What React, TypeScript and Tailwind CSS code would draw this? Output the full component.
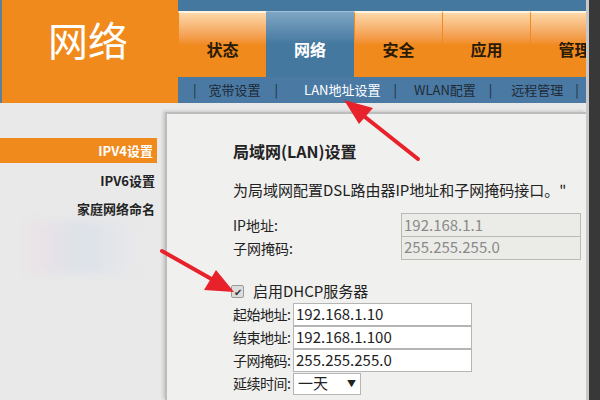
const tabs = ["状态", "网络", "安全", "应用", "管理"];

const subLinks = [
  { label: "宽带设置", active: false, pad: "pl-[12px] pr-[14px]" },
  { label: "LAN地址设置", active: true, pad: "pl-[26px] pr-[13px]" },
  { label: "WLAN配置", active: false, pad: "pl-[17px] pr-[13px]" },
  { label: "远程管理", active: false, pad: "pl-[19px] pr-[12px]" },
];

function Arrows() {
  return (
    <svg
      className="pointer-events-none absolute inset-0"
      width={600}
      height={400}
      viewBox="0 0 600 400"
    >
      <line x1={418} y1={159} x2={360} y2={113} stroke="#e8222a" strokeWidth={4} strokeLinecap="round" />
      <polygon points="344,100 373,108 359,124" fill="#e8222a" />
      <line x1={162} y1={251} x2={215} y2={281} stroke="#e8222a" strokeWidth={4} strokeLinecap="round" />
      <polygon points="234,292 204,290 216,270" fill="#e8222a" />
    </svg>
  );
}

function Field({ label, value }: { label: string; value: string }) {
  return (
    <div className="flex h-[23px] items-center">
      <span className="w-[60px] shrink-0 whitespace-nowrap text-[14px] tracking-[-0.5px] text-[#222]">{label}</span>
      <div className="flex h-[23px] w-[179px] shrink-0 items-center border border-[#b5b5b5] bg-white px-[2px] text-[15px] text-[#222]">
        {value}
      </div>
    </div>
  );
}

export default function App() {
  return (
    <div
      className="relative flex h-[400px] w-[600px] overflow-hidden bg-[#ebebeb]"
      style={{ fontFamily: '"Noto Sans CJK SC", "Noto Sans", sans-serif' }}
    >
      <div className="flex w-[586px] shrink-0 flex-col">
        {/* header */}
        <div className="flex h-[103px]">
          <div className="flex w-[178px] shrink-0 items-center justify-center border-l-2 border-[#5c7f9c] bg-[#f08a1d] pb-[26px] pr-[4px]">
            <span className="text-[40px] leading-none text-white">网络</span>
          </div>
          <div className="flex min-w-0 flex-1 flex-col overflow-hidden bg-[#44789f]">
            <div className="h-[11px]" />
            <div className="flex h-[66px]">
              {tabs.map((t) => (
                <div
                  key={t}
                  className={
                    t === "网络"
                      ? "flex w-[88px] shrink-0 items-center justify-center border-t border-[#9fc0d8] bg-gradient-to-b from-[#7fa6c4] via-[#44789f] to-[#44789f] pt-[8px] text-[16px] font-bold text-white"
                      : "flex w-[88px] shrink-0 items-center justify-center border-t-2 border-l border-[#fff3e0] border-l-[#f08a1d] bg-gradient-to-b from-[#fbd7a8] via-[#f08a1d] to-[#f08a1d] pt-[8px] text-[16px] font-bold text-[#2a1a08]"
                  }
                >
                  {t}
                </div>
              ))}
            </div>
            <div
              className="flex h-[26px] items-center whitespace-nowrap bg-[#4a7aa4] pl-[15px] text-[13px] text-[#1e2a36]"
              style={{ fontFamily: '"Noto Sans CJK SC", "DejaVu Sans Mono", monospace' }}
            >
              <span>|</span>
              {subLinks.map((s) => (
                <div key={s.label} className="flex shrink-0 items-center">
                  <span className={(s.active ? "text-white " : "") + s.pad}>{s.label}</span>
                  <span>|</span>
                </div>
              ))}
            </div>
          </div>
        </div>

        {/* body */}
        <div className="flex flex-1 bg-[#e9e9e9]">
          <div className="flex w-[165px] shrink-0 flex-col pt-[35px]">
            <div className="flex h-[25px] w-[157px] items-center justify-end bg-[#f08a1d] pr-[4px] text-[13px] font-bold text-white">
              IPV4设置
            </div>
            <div className="mt-[8px] flex w-[157px] flex-col items-end gap-[8px] pr-[2px] text-[13px] font-bold text-[#222]">
              <span>IPV6设置</span>
              <span>家庭网络命名</span>
            </div>
            <div className="ml-[27px] mt-[2px] h-[55px] w-[110px] rounded-[6px] bg-gradient-to-r from-[#ece3e6] via-[#dde2e9] to-[#e8e8ea] blur-[4px]" />
          </div>

          <div className="mt-[9px] min-w-0 flex-1 overflow-hidden border-l-2 border-t-2 border-[#bdbdbd] bg-[#f0f0ee] pl-[66px] pt-[25px] shadow-[-2px_-1px_3px_rgba(0,0,0,0.15)]">
            <div className="text-[16px] font-bold text-[#222]">局域网(LAN)设置</div>
            <div className="mt-[16px] whitespace-nowrap text-[15px] text-[#222]">
              为局域网配置DSL路由器IP地址和子网掩码接口。"
            </div>

            <div className="mt-[12px] flex flex-col">
              <div className="flex h-[23px] items-center">
                <span className="w-[168px] shrink-0 text-[14px] text-[#222]">IP地址:</span>
                <div className="flex h-[24px] w-[180px] shrink-0 items-center border border-[#b9b9b6] bg-[#ebebe8] px-[2px] text-[15px] text-[#8a8a8a]">
                  192.168.1.1
                </div>
              </div>
              <div className="flex h-[23px] items-center">
                <span className="w-[168px] shrink-0 text-[14px] text-[#222]">子网掩码:</span>
                <div className="flex h-[23px] w-[180px] shrink-0 items-center border border-t-0 border-[#b9b9b6] bg-[#ebebe8] px-[2px] text-[15px] text-[#8a8a8a]">
                  255.255.255.0
                </div>
              </div>
            </div>

            <div className="mt-[22px] flex h-[20px] items-center">
              <div className="ml-[-2px] flex h-[13px] w-[13px] items-center justify-center rounded-[2px] border border-[#9a9a9a] bg-[#dcdcdc] text-[10px] leading-none text-[#333]">
                ✔
              </div>
              <span className="ml-[9px] text-[15px] text-[#222]">启用DHCP服务器</span>
            </div>

            <div className="mt-[1px] flex flex-col">
              <Field label="起始地址:" value="192.168.1.10" />
              <Field label="结束地址:" value="192.168.1.100" />
              <Field label="子网掩码:" value="255.255.255.0" />
              <div className="mt-[1px] flex h-[22px] items-center">
                <span className="w-[60px] shrink-0 whitespace-nowrap text-[14px] tracking-[-0.5px] text-[#222]">延续时间:</span>
                <div className="flex h-[22px] w-[68px] shrink-0 items-center justify-between border border-[#b5b5b5] bg-white px-[4px] text-[15px] text-[#222]">
                  <span>一天</span>
                  <span className="text-[9px]">▼</span>
                </div>
              </div>
            </div>
          </div>
        </div>
      </div>

      <div className="flex w-[14px] shrink-0">
        <div className="w-[3px] bg-[#c8c8c8]" />
        <div className="flex-1 bg-[#383838]" />
      </div>

      <Arrows />
    </div>
  );
}
